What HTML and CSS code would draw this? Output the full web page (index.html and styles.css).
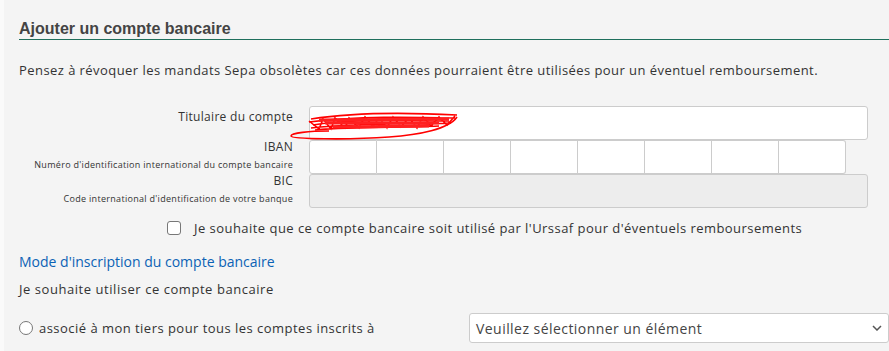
FILE: index.html
```html
<!DOCTYPE html>
<html lang="fr">
<head>
    <meta charset="UTF-8">
    <meta name="viewport" content="width=device-width, initial-scale=1.0">
    <title>Ajouter un compte bancaire</title>
    <link rel="stylesheet" href="styles.css">
</head>

<body>
    <div class="page">
        <!-- Titre de la section -->
        <h2 class="section-title">Ajouter un compte bancaire</h2>
        <p class="notice">Pensez à révoquer les mandats Sepa obsolètes car ces données pourraient être utilisées pour un éventuel remboursement.</p>

        <!-- Formulaire du compte -->
        <div class="form-grid">
            <div class="field-label label-holder">
                <span class="label-main">Titulaire du compte</span>
            </div>
            <div class="holder-field">
                <input class="input" type="text">
                <svg class="scribble" width="172" height="32" viewBox="0 0 172 32">
                    <path d="M22 10 C60 4 110 3 168 6 M20 13 C70 7 120 8 166 9 M24 16 C60 10 100 12 160 12 M22 19 C70 14 120 15 162 14 M26 21 C70 17 110 19 150 17 M20 12 L30 20 L34 10 L42 20 L46 9 L56 19 L60 9 L70 19 L76 8 L84 18 L90 9 L98 19 L104 8 L112 18 L120 9 L128 19 L134 8 L142 17 L150 8 L158 16 L166 7" fill="none" stroke="#ff0000" stroke-width="1.6"/>
                    <path d="M40 22 C20 22 2 24 2 27 C2 30 60 31 100 28 C130 26 160 20 168 8" fill="none" stroke="#ff0000" stroke-width="1.6"/>
                    <path d="M36 14 L150 14 M44 18 L140 17 M30 11 L160 10" fill="none" stroke="#ff2020" stroke-width="3"/>
                </svg>
            </div>

            <div class="field-label">
                <span class="label-main">IBAN</span>
                <span class="label-sub">Numéro d'identification international du compte bancaire</span>
            </div>
            <div class="iban-boxes">
                <input class="input iban-part" type="text">
                <input class="input iban-part" type="text">
                <input class="input iban-part" type="text">
                <input class="input iban-part" type="text">
                <input class="input iban-part" type="text">
                <input class="input iban-part" type="text">
                <input class="input iban-part" type="text">
                <input class="input iban-part" type="text">
            </div>

            <div class="field-label">
                <span class="label-main">BIC</span>
                <span class="label-sub">Code international d'identification de votre banque</span>
            </div>
            <input class="input input-disabled" type="text" disabled>
        </div>

        <label class="check-row">
            <span class="checkbox"></span>
            Je souhaite que ce compte bancaire soit utilisé par l'Urssaf pour d'éventuels remboursements
        </label>

        <!-- Mode d'inscription -->
        <h3 class="mode-title">Mode d'inscription du compte bancaire</h3>
        <p class="mode-text">Je souhaite utiliser ce compte bancaire</p>

        <div class="radio-row">
            <label class="radio-label">
                <span class="radio"></span>
                associé à mon tiers pour tous les comptes inscrits à
            </label>
            <div class="select">
                <span>Veuillez sélectionner un élément</span>
                <svg class="chevron" width="10" height="6" viewBox="0 0 10 6">
                    <path d="M1 1 L5 5 L9 1" fill="none" stroke="#555" stroke-width="1.5"/>
                </svg>
            </div>
        </div>
    </div>
</body>

</html>
```

FILE: styles.css
```css
/* Basic styling for the page */
body {
    margin: 0;
    padding: 0;
    background-color: #fafafa;
    font-family: 'Open Sans', sans-serif;
    color: #333;
}

.page {
    margin-left: 4px;
    padding-left: 15px;
    height: 351px;
    background-color: #f4f4f4;
    overflow: hidden;
}

.section-title {
    margin: 0;
    padding-top: 19px;
    font-family: 'Liberation Sans', Arial, sans-serif;
    font-size: 16px;
    font-weight: bold;
    line-height: 20px;
    color: #444;
    border-bottom: 1px solid #1f6f5c;
}

.notice {
    margin: 20px 0 0;
    font-size: 13px;
    line-height: 20px;
    letter-spacing: 0.44px;
}

/* Form grid */
.form-grid {
    display: grid;
    grid-template-columns: 274px 559px;
    grid-auto-rows: 34px;
    column-gap: 16px;
    margin-top: 26px;
}

.field-label {
    display: flex;
    flex-direction: column;
    align-items: flex-end;
    text-align: right;
    white-space: nowrap;
}

.label-main {
    font-size: 12px;
    line-height: 14px;
    letter-spacing: 0.3px;
}

.label-holder {
    padding-top: 4px;
}

.label-sub {
    margin-top: 5px;
    font-size: 9px;
    line-height: 12px;
    letter-spacing: 0.3px;
}

.input {
    box-sizing: border-box;
    height: 34px;
    width: 100%;
    margin: 0;
    border: 1px solid #ccc;
    border-radius: 3px;
    background-color: white;
}

.input-disabled {
    background-color: #ededed;
}

.holder-field {
    position: relative;
}

.scribble {
    position: absolute;
    left: -20px;
    top: 3px;
}

.iban-boxes {
    display: flex;
}

.iban-part {
    flex: none;
    width: 67px;
    border-radius: 0;
    border-left: none;
}

.iban-part:first-child {
    width: 68px;
    border-left: 1px solid #ccc;
    border-radius: 3px 0 0 3px;
}

.iban-part:last-child {
    border-radius: 0 3px 3px 0;
}

/* Checkbox row */
.check-row {
    display: flex;
    align-items: center;
    margin-top: 10px;
    padding-left: 148px;
    font-size: 13px;
    line-height: 20px;
    letter-spacing: 0.46px;
}

.checkbox {
    box-sizing: border-box;
    width: 14px;
    height: 14px;
    margin-right: 13px;
    border: 1px solid #777;
    border-radius: 3px;
    background-color: white;
}

.mode-title {
    margin: 14px 0 0;
    font-size: 14px;
    font-weight: normal;
    line-height: 20px;
    color: #0b62b4;
}

.mode-text {
    margin: 7px 0 0;
    font-size: 13px;
    line-height: 20px;
    letter-spacing: 0.55px;
}

/* Radio + select */
.radio-row {
    display: flex;
    align-items: center;
    justify-content: space-between;
    margin-top: 14px;
    height: 30px;
}

.radio-label {
    display: flex;
    align-items: center;
    font-size: 13px;
    letter-spacing: 0.47px;
}

.radio {
    box-sizing: border-box;
    width: 14px;
    height: 14px;
    margin-right: 6px;
    border: 1px solid #777;
    border-radius: 50%;
    background-color: white;
}

.select {
    box-sizing: border-box;
    display: flex;
    align-items: center;
    justify-content: space-between;
    width: 420px;
    height: 30px;
    padding: 0 6px 0 6px;
    border: 1px solid #ccc;
    border-radius: 3px;
    background-color: white;
    font-size: 14px;
    letter-spacing: 0.45px;
    color: #444;
}
```
